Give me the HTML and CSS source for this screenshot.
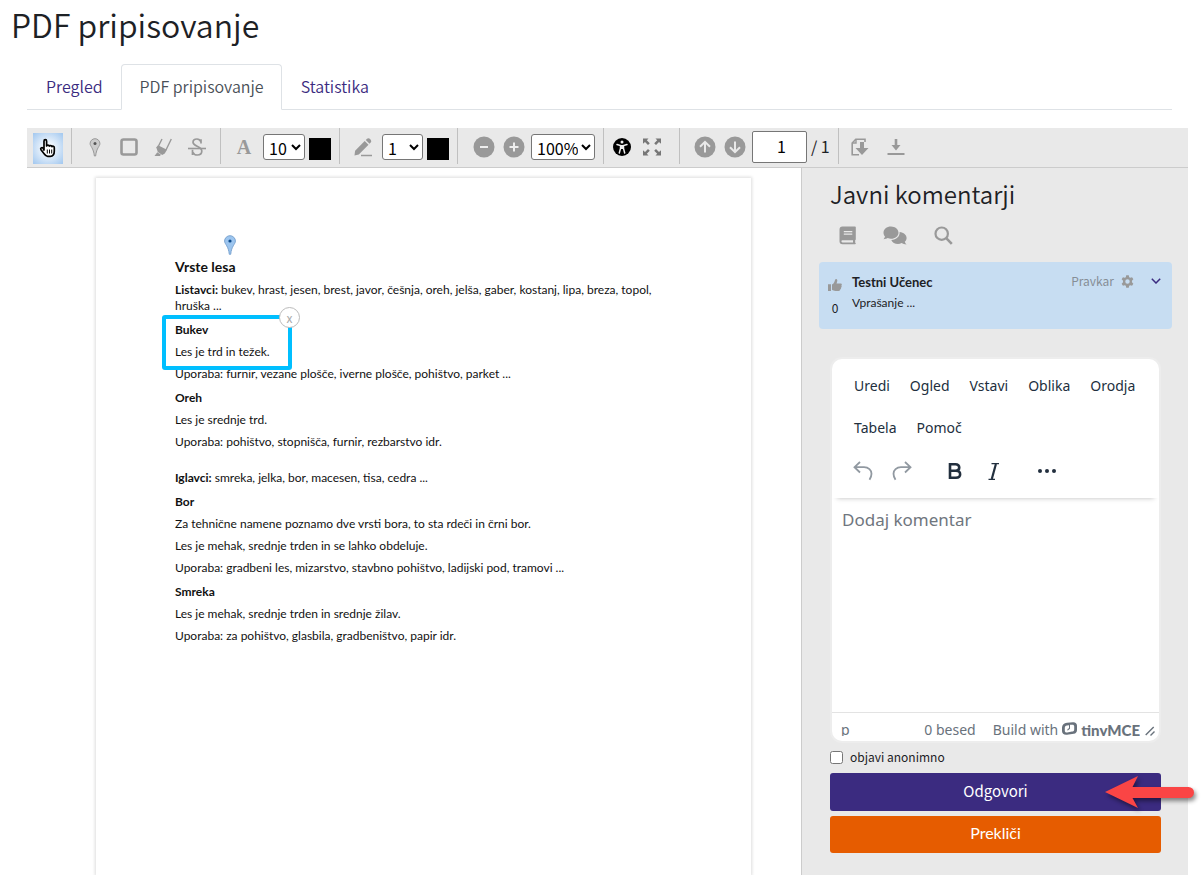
FILE: index.html
```html
<!DOCTYPE html>
<html lang="sl">
<head>
<meta charset="utf-8">
<title>PDF pripisovanje</title>
<link rel="stylesheet" href="styles.css">
</head>
<body>
<h1 class="page-title">PDF pripisovanje</h1>
<nav class="tabs">
  <a class="tab" href="#pregled">Pregled</a>
  <a class="tab tab-active" href="#pdf">PDF pripisovanje</a>
  <a class="tab" href="#statistika">Statistika</a>
</nav>

<div class="annotator">
  <div class="toolbar">
    <div class="group group-cursor">
      <button class="tool tool-active" aria-label="Kazalec"><svg width="18" height="20" viewBox="0 0 18 20"><path d="M5 12V3.2c0-2 2.6-2 2.6 0V8c.3-1.200 2.500-1.200 2.700.2.500-1 2.400-.8 2.600.5.700-.9 2.400-.5 2.400 1V13c0 3-1.200 5.300-4 5.300H8.600c-1.600 0-2.500-1-3.500-2.500L2 11.700c-1-1.600.9-2.800 2-1.700z" fill="#fff" stroke="#000" stroke-width="1.700" stroke-linejoin="round"/><path d="M8.300 11.500v4M10.500 11.500v4M12.700 11.500v4" stroke="#000" stroke-width="1"/></svg></button>
    </div>
    <div class="group">
      <button class="tool" aria-label="Zaznamek"><svg width="12" height="19" viewBox="0 0 12 19"><path d="M6 .7a4.900 4.900 0 0 0-4.900 5c0 2.500 3.300 4 4.300 12.300h1.200C7.600 9.700 10.900 8.200 10.900 5.700A4.900 4.900 0 0 0 6 .7z" fill="#ccc" stroke="#999"/><circle cx="6" cy="5.500" r="1.500" fill="#555"/></svg></button>
      <button class="tool" aria-label="Pravokotnik"><svg width="18" height="18" viewBox="0 0 18 18"><rect x="1.500" y="1.500" width="15" height="15" rx="2" fill="#e9e9e9" stroke="#999" stroke-width="2.600"/></svg></button>
      <button class="tool" aria-label="Označevalnik"><svg width="18" height="19" viewBox="0 0 18 19"><path d="M.500 18 3.300 14.300l3.700 2.500-1.200 1.200zM2.300 9.500l8.500 5.900-2.600 1.600-4.400-3.100zM2 9.700 4 7.300l9 4.500-2.400 4z" fill="#999"/><path d="M4.500 8 8 1M12 12 17.300 1" fill="none" stroke="#999" stroke-width="1.400"/></svg></button>
      <button class="tool" aria-label="Prečrtaj"><svg width="18" height="20" viewBox="0 0 18 20"><path d="M13 6.500V2.200M13 5C12 2.800 10.700 2 9 2 6.500 2 5 3.200 5 5.200c0 4.400 8.800 3.600 8.800 8.800 0 2.400-1.800 4-4.500 4-2.300 0-3.800-1-4.800-3.200M4.500 12.800V18" fill="none" stroke="#999" stroke-width="1.700"/><path d="M0 11.500h18" stroke="#999" stroke-width="1.600"/></svg></button>
    </div>
    <div class="group">
      <button class="tool tool-letter" aria-label="Besedilo">A</button>
      <select class="pick pick-size" aria-label="Velikost besedila"><option>10</option></select>
      <button class="swatch" aria-label="Barva besedila"></button>
    </div>
    <div class="group">
      <button class="tool" aria-label="Svinčnik"><svg width="19" height="20" viewBox="0 0 19 20"><path d="M.500 18.500l.6-4.800L10.700 4l3.800 3.800-9.700 9.800zM11.800 3l1.200-1.200c2-2 5.600 1.700 3.700 3.700l-1.200 1.200z" fill="#999"/><path d="M7 18.500h11" stroke="#999" stroke-width="1.500"/></svg></button>
      <select class="pick pick-line" aria-label="Debelina črte"><option>1</option></select>
      <button class="swatch" aria-label="Barva črte"></button>
    </div>
    <div class="group group-zoom">
      <button class="tool tool-narrow" aria-label="Pomanjšaj"><svg width="22" height="22" viewBox="0 0 22 22"><circle cx="11" cy="11" r="10.500" fill="#999"/><path d="M7 11h8" stroke="#eee" stroke-width="2"/></svg></button>
      <button class="tool tool-narrow" aria-label="Povečaj"><svg width="22" height="22" viewBox="0 0 22 22"><circle cx="11" cy="11" r="10.500" fill="#999"/><path d="M6.500 11h9M11 6.500v9" stroke="#eee" stroke-width="2"/></svg></button>
      <select class="pick pick-zoom" aria-label="Povečava"><option>100%</option></select>
    </div>
    <div class="group group-view">
      <button class="tool tool-narrow" aria-label="Dostopnost"><svg width="18" height="18" viewBox="0 0 18 18"><circle cx="9" cy="9" r="9" fill="#000"/><circle cx="9" cy="4" r="1.500" fill="#eee"/><path d="M4 6.600l3.500.9v3L6.300 15M14 6.600l-3.500.9v3l1.200 4.500" fill="none" stroke="#eee" stroke-width="1.500" stroke-linecap="round"/><path d="M7 7h4v4H7z" fill="#eee"/></svg></button>
      <button class="tool tool-narrow" aria-label="Celozaslonski način"><svg width="20" height="18" viewBox="0 0 20 18"><path d="M1 .5h5.500L4.800 2.200l3 3L6 7 3 4 1 5.800zM19 .5h-5.500l1.700 1.700-3 3L14 7l3-3 2 1.800zM1 17.500h5.500l-1.700-1.700 3-3L6 11l-3 3-2-1.800zM19 17.500h-5.500l1.700-1.700-3-3L14 11l3 3 2-1.800z" fill="#777"/></svg></button>
    </div>
    <div class="group group-pages">
      <button class="tool tool-narrow" aria-label="Prejšnja stran"><svg width="22" height="22" viewBox="0 0 22 22"><circle cx="11" cy="11" r="10.500" fill="#999"/><path d="M11 16.500V6M6 10.800l5-5 5 5" fill="none" stroke="#e9e9e9" stroke-width="2"/></svg></button>
      <button class="tool tool-narrow" aria-label="Naslednja stran"><svg width="22" height="22" viewBox="0 0 22 22"><circle cx="11" cy="11" r="10.500" fill="#999"/><path d="M11 5.500V16M6 11.200l5 5 5-5" fill="none" stroke="#e9e9e9" stroke-width="2"/></svg></button>
      <input class="page-number" type="text" value="1" aria-label="Stran">
      <span class="page-total">/ 1</span>
    </div>
    <div class="group group-export">
      <button class="tool tool-narrow" aria-label="Izvozi dokument"><svg width="18" height="18" viewBox="0 0 18 18"><path d="M14 4V1.200H4.800L1.200 5v11.800H8" fill="none" stroke="#999" stroke-width="1.600"/><path d="M5 1v4H1" fill="none" stroke="#999" stroke-width="1.400"/><path d="M9 4h4v6h4.500L11 17 4.500 10H9z" fill="#999"/></svg></button>
      <button class="tool tool-narrow" aria-label="Prenesi"><svg width="18" height="18" viewBox="0 0 18 18"><path d="M7.700 1h2.600v6h3.200L9 12.500 4.500 7h3.200zM.5 15h17v2H.5z" fill="#999"/></svg></button>
    </div>
  </div>

  <div class="workspace">
    <main class="viewer">
      <article class="sheet">
        <svg class="pin" width="14" height="20" viewBox="0 0 14 20"><path d="M7 .700a5.400 5.400 0 0 0-5.400 5.400c0 3 4 5 4.700 13.200h1.400C8.400 11.100 12.400 9.100 12.400 6.100A5.400 5.400 0 0 0 7 .7z" fill="#9cc5ef" stroke="#7ba4d0"/><circle cx="7" cy="6" r="1.600" fill="#0e4c8c"/></svg>
        <div class="mark"><button class="mark-close" aria-label="Odstrani">x</button></div>
        <h2>Vrste lesa</h2>
        <p><b>Listavci:</b> bukev, hrast, jesen, brest, javor, češnja, oreh, jelša, gaber, kostanj, lipa, breza, topol, hruška ...</p>
        <h3>Bukev</h3>
        <p>Les je trd in težek.</p>
        <p>Uporaba: furnir, vezane plošče, iverne plošče, pohištvo, parket ...</p>
        <h3>Oreh</h3>
        <p>Les je srednje trd.</p>
        <p>Uporaba: pohištvo, stopnišča, furnir, rezbarstvo idr.</p>
        <p class="part"><b>Iglavci:</b> smreka, jelka, bor, macesen, tisa, cedra ...</p>
        <h3>Bor</h3>
        <p>Za tehnične namene poznamo dve vrsti bora, to sta rdeči in črni bor.</p>
        <p>Les je mehak, srednje trden in se lahko obdeluje.</p>
        <p>Uporaba: gradbeni les, mizarstvo, stavbno pohištvo, ladijski pod, tramovi ...</p>
        <h3>Smreka</h3>
        <p>Les je mehak, srednje trden in srednje žilav.</p>
        <p>Uporaba: za pohištvo, glasbila, gradbeništvo, papir idr.</p>
      </article>
    </main>

    <aside class="comments">
      <h2 class="comments-title">Javni komentarji</h2>
      <div class="comments-tools">
        <button class="plain" aria-label="Dokument"><svg width="17" height="19" viewBox="0 0 17 19"><path fill-rule="evenodd" d="M3.500.500H16c.5 0 .8.300.8.800v12c0 .4-.2.700-.6.900v2.500c.4.100.6.400.6.800s-.4.800-.8.800H3.500A3 3 0 0 1 .5 15.300V3.500a3 3 0 0 1 3-3zM4.800 5v1.200h8.500V5zm0 2.600v1.200h8.500V7.600zM3.500 14.200c-1.500 0-1.500 2.200 0 2.200H14v-2.200z" fill="#999"/></svg></button>
        <button class="plain" aria-label="Pogovori"><svg width="24" height="19" viewBox="0 0 24 19"><path d="M8 .5C3.700.5.500 3.200.500 6.800c0 1.500.5 2.800 1.500 3.800-.3 1-.8 1.900-1.500 2.700 1.700 0 3-.5 4.200-1.200 1 .4 2.200.6 3.300.6 4.200 0 7.500-2.600 7.500-6S12.200.5 8 .5z" fill="#999"/><path d="M16.600 6c.5 4.200-3.400 8-8.300 8 1 2.400 3.600 4 6.600 4 1.400 0 2.600-.3 3.700-.9 1.200.8 3 1.300 4.900 1.300-.8-.8-1.500-1.700-1.700-2.700 1.200-1 1.800-2.300 1.800-3.700 0-3-2.900-5.500-7-6z" fill="#999"/></svg></button>
        <button class="plain" aria-label="Išči"><svg width="19" height="19" viewBox="0 0 19 19"><circle cx="7.700" cy="7.700" r="6.200" fill="none" stroke="#999" stroke-width="2.200"/><path d="M12.200 12.200l5.600 5.600" stroke="#999" stroke-width="2.600"/></svg></button>
      </div>

      <section class="comment">
        <div class="votes">
          <button class="plain" aria-label="Všeč mi je"><svg width="14" height="12" viewBox="0 0 14 12"><path d="M0 5.200h3V12H0zM4 5.500C6 4.500 6.500 2.800 7 1c.5-1.700 2.500-1 2.300.8C9.200 2.900 8.800 3.800 8.500 4.500h4c1.500 0 1.700 1.500.8 2.200.7.700.4 1.700-.4 2 .4.800 0 1.500-.7 1.700.1 1-.5 1.600-1.500 1.600H7.500C6 12 5 11.500 4 10.800z" fill="#999"/></svg></button>
          <span>0</span>
        </div>
        <div class="comment-body">
          <strong>Testni Učenec</strong>
          <p>Vprašanje ...</p>
        </div>
        <div class="comment-meta">
          <span>Pravkar</span>
          <button class="plain" aria-label="Nastavitve"><svg width="13" height="13" viewBox="0 0 14 14"><path fill-rule="evenodd" d="M5.600.300h2.800l.4 2 1.200.7 1.900-.7 1.400 2.400-1.500 1.400v1.800l1.500 1.400-1.400 2.400-1.900-.7-1.200.7-.4 2H5.600l-.4-2-1.200-.7-1.900.7L.700 9.300l1.500-1.400V6.100L.7 4.700l1.400-2.400L4 3l1.200-.7zM7 4.600a2.400 2.400 0 1 0 0 4.800 2.400 2.400 0 0 0 0-4.800z" fill="#999"/></svg></button>
          <button class="plain expand" aria-label="Razširi"><svg width="10" height="6" viewBox="0 0 10 6"><path d="M.8.800 5 5 9.200.8" fill="none" stroke="#3b2b80" stroke-width="1.500"/></svg></button>
        </div>
      </section>

      <form class="reply">
        <div class="editor">
          <div class="editor-head">
            <div class="menubar">
              <button type="button">Uredi</button><button type="button">Ogled</button><button type="button">Vstavi</button><button type="button">Oblika</button><button type="button">Orodja</button><button type="button">Tabela</button><button type="button">Pomoč</button>
            </div>
            <div class="editor-tools">
              <button type="button" class="edit-tool" aria-label="Razveljavi"><svg width="20" height="20" viewBox="0 0 20 20"><path d="M7 1 1.500 6.200 7 11.500M2 6.200h9c4.500 0 7.500 3 7.500 6.500 0 2-.7 4-2 6" fill="none" stroke="#9199a1" stroke-width="1.800"/></svg></button>
              <button type="button" class="edit-tool" aria-label="Uveljavi"><svg width="20" height="20" viewBox="0 0 20 20"><path d="M13 1l5.500 5.200L13 11.500M18 6.200H9c-4.500 0-7.500 3-7.500 6.500 0 2 .7 4 2 6" fill="none" stroke="#9199a1" stroke-width="1.800"/></svg></button>
              <button type="button" class="edit-tool edit-next" aria-label="Krepko"><svg width="14" height="16" viewBox="0 0 14 16"><path d="M2 1.300h5.500c5 0 5 6.400 0 6.400H2zM2 7.700h6c5.500 0 5.500 7 0 7H2z" fill="none" stroke="#222f3e" stroke-width="2.600"/></svg></button>
              <button type="button" class="edit-tool" aria-label="Ležeče"><svg width="12" height="17" viewBox="0 0 12 17"><path d="M3.500.600H11M.5 16.400H7" fill="none" stroke="#222f3e" stroke-width="1.200"/><path d="M7.900 1 3.800 16" fill="none" stroke="#222f3e" stroke-width="2.200"/></svg></button>
              <button type="button" class="edit-tool edit-next" aria-label="Več"><svg width="18" height="4" viewBox="0 0 18 4"><circle cx="2" cy="2" r="2" fill="#222f3e"/><circle cx="9" cy="2" r="2" fill="#222f3e"/><circle cx="16" cy="2" r="2" fill="#222f3e"/></svg></button>
            </div>
          </div>
          <textarea class="editor-text" placeholder="Dodaj komentar" aria-label="Dodaj komentar"></textarea>
          <div class="statusbar">
            <div class="status-text">
              <span class="status-path">p</span>
              <span>0 besed</span>
              <a class="brand" href="#tiny">Build with <svg width="15" height="13" viewBox="0 0 15 13"><path fill-rule="evenodd" d="M5 .700 11 .200c2.300-.2 4 1.300 4 3.500V8c0 2.200-1.300 3.500-3.200 3.800L5 12.800C2 13.200 0 11.700 0 9V5.500C0 3 2 1 5 .7zM5 3.500C3.500 3.700 2.800 4.500 2.800 5.800v2.900c0 1.300.9 2 2.400 1.800l4.800-.9c1.500-.2 2.200-1 2.200-2.200V4.300c0-1.200-.9-1.800-2.200-1.600H8v4L5.500 8.700V7l1.500-.7V3.200z" fill="#69727c"/></svg> <b>tinyMCE</b></a>
            </div>
            <svg class="grip" width="10" height="10" viewBox="0 0 10 10"><path d="M.7 9 8.700 1M5.500 9.500 9.500 5.500" stroke="#69727c" stroke-width="1.400"/></svg>
          </div>
        </div>
        <label class="anonymous"><input type="checkbox"> objavi anonimno</label>
        <button type="button" class="btn btn-primary">Odgovori
          <svg class="pointer" width="96" height="42" viewBox="0 0 96 42"><path d="M2 20 35 4l-5.500 11H85.500a5.500 5.500 0 0 1 0 11H29.500L35 36z" fill="#fa4545"/></svg>
        </button>
        <button type="button" class="btn btn-cancel">Prekliči</button>
      </form>
    </aside>
  </div>
</div>
</body>
</html>
```
FILE: styles.css
```css
* { box-sizing: border-box; }

body {
  margin: 0;
  min-height: 100vh;
  display: flex;
  flex-direction: column;
  overflow-x: hidden;
  background: #fff;
  color: #1d2125;
  font: 13px/20px "Noto Sans CJK SC", "Noto Sans", sans-serif;
}

h1, h2, h3, p { margin: 0; }
button, input, select, textarea { font: inherit; color: inherit; margin: 0; }
button { cursor: pointer; padding: 0; border: 0; background: none; }
svg { display: block; }

.page-title {
  padding: 2px 11px 0;
  font-size: 32px;
  line-height: 44px;
  font-weight: 350;
}

/* Tabs */
.tabs {
  display: flex;
  margin: 18px 32px 0 27px;
  border-bottom: 1px solid #dee2e6;
}
.tab {
  padding: 7px 17px 9px 18px;
  margin-bottom: -1px;
  border: 1px solid transparent;
  border-radius: 4px 4px 0 0;
  font-size: 16px;
  font-weight: 350;
  line-height: 28px;
  color: #3b2b80;
  text-decoration: none;
}
.tab-active { background: #fff; border-color: #dee2e6 #dee2e6 #fff; color: #495057; }

.annotator {
  flex: 1;
  display: flex;
  flex-direction: column;
  margin: 18px 16px 0 27px;
}

/* Toolbar */
.toolbar {
  display: flex;
  height: 40px;
  padding-bottom: 3px;
  background: #e9e9e9;
  border-bottom: 1px solid #ccc;
}
.group {
  display: flex;
  align-items: center;
  gap: 4px;
  padding: 2px 8px 0;
  border-right: 1px solid #c0c0c0;
}
.group-cursor { padding: 4px 8px 0 6px; }
.group-zoom { padding-left: 13px; }
.group-view { padding: 2px 14px 0 5px; }
.group-pages { padding-left: 12px; }
.group-export { gap: 10px; border-right: 0; }
.tool {
  display: flex;
  align-items: center;
  justify-content: center;
  width: 30px;
  height: 30px;
}
.tool-narrow { width: 26px; }
.tool-active { height: 31px; background: radial-gradient(circle, #fff 10%, #a6caf0 95%); }
.tool-letter { color: #999; font: bold 20px/30px "Liberation Serif", serif; }
.pick {
  height: 26px;
  padding: 0 0 2px 1px;
  border: 1px solid #767676;
  border-radius: 3px;
  background: #fff;
  color: #000;
  font-size: 16px;
  line-height: 22px;
}
.pick-size { width: 42px; }
.pick-line { width: 41px; }
.pick-zoom { width: 64px; }
.swatch { width: 22px; height: 22px; margin-top: 4px; background: #000; }
.page-number {
  width: 55px;
  height: 32px;
  border: 1px solid #767676;
  border-radius: 2px;
  padding: 0 2px 2px 6px;
  background: #fff;
  color: #000;
  font-size: 16px;
  text-align: center;
}
.page-total { padding-bottom: 2px; font-size: 16px; white-space: nowrap; }

/* Document */
.workspace { flex: 1; display: grid; grid-template-columns: 1fr 387px; }
.viewer { display: flex; padding: 10px 50px 0 69px; }
.sheet {
  position: relative;
  flex: 1;
  padding: 80px 70px 0 79px;
  background: #fff;
  box-shadow: 0 0 3px 1px #ddd;
  color: #111;
  font: 12px/16px Lato, sans-serif;
}
.sheet h2 { font-size: 14px; line-height: 18px; }
.sheet h3 { margin-top: 8px; font-size: 12px; line-height: 16px; }
.sheet p { margin-top: 6px; }
.sheet .part { margin-top: 20px; }
.pin { position: absolute; left: 127px; top: 57px; }
.mark {
  position: absolute;
  left: 66px;
  top: 137px;
  width: 130px;
  height: 55px;
  border: 4px solid #00bfff;
  border-radius: 3px;
}
.mark-close {
  position: absolute;
  right: -12px;
  top: -12px;
  width: 21px;
  height: 21px;
  border: 1px solid #bbb;
  border-radius: 50%;
  background: #fff;
  color: #aaa;
  font: 12px/16px "Noto Sans CJK SC", sans-serif;
}

/* Comments */
.comments {
  border-left: 1px solid #ccc;
  background: #e9e9e9;
  padding: 8px 16px 22px 17px;
}
.comments-title { padding-left: 11px; font-size: 24px; line-height: 36px; font-weight: 350; }
.comments-tools {
  display: flex;
  align-items: center;
  gap: 27px;
  padding: 14px 20px 17px;
  line-height: 0;
}
.comment {
  display: flex;
  height: 67px;
  padding: 10px 11px 0 10px;
  border-radius: 4px;
  background: #c7ddf2;
  font-size: 12px;
}
.votes { width: 12px; display: flex; flex-direction: column; align-items: center; gap: 7px; padding-top: 7px; }
.comment-body { flex: 1; padding-left: 11px; font-family: Lato, sans-serif; }
.comment-body strong { font-size: 13px; }
.comment-meta { display: flex; align-items: center; gap: 7px; height: 18px; color: #868e96; }
.expand { margin-left: 10px; }
.reply { padding: 30px 11px 0; }

.editor {
  margin: 0 2px;
  border-radius: 10px;
  background: #fff;
  box-shadow: 0 0 0 2px #ededed;
  color: #222f3e;
  font-family: "Noto Sans", sans-serif;
  font-size: 14px;
}
.editor-head { position: relative; padding: 6px 12px 5px; box-shadow: 0 5px 5px -5px #bbb; }
.menubar { display: flex; flex-wrap: wrap; }
.menubar button { height: 42px; padding: 0 10px; }
.editor-tools { display: flex; align-items: center; height: 44px; padding-left: 1px; }
.edit-tool { display: flex; align-items: center; justify-content: center; width: 36px; height: 34px; margin-right: 3px; }
.edit-next { margin-left: 14px; }
.editor-text {
  display: block;
  width: 100%;
  height: 214px;
  padding: 10px;
  border: 0;
  background: none;
  resize: none;
  font-size: 17px;
  line-height: 24px;
}
.editor-text::placeholder { color: #6f767e; }
.statusbar {
  display: flex;
  align-items: flex-start;
  height: 29px;
  padding: 7px 4px 0 9px;
  border-top: 1px solid #e3e3e3;
  color: #69727c;
}
.status-text { flex: 1; display: flex; gap: 17px; height: 16px; overflow: hidden; line-height: 20px; }
.status-path { flex: 1; }
.brand { display: flex; align-items: center; gap: 4px; height: 20px; color: inherit; text-decoration: none; }
.brand b { font: 900 15px/20px Lato, sans-serif; }
.brand svg { margin-bottom: 3px; }
.grip { margin: 6px 0 0 5px; }

.anonymous { display: flex; align-items: center; gap: 7px; height: 32px; font-size: 12px; }
.anonymous input { width: 13px; height: 13px; }
.btn {
  position: relative;
  display: block;
  width: 100%;
  height: 38px;
  padding-bottom: 3px;
  border-radius: 3px;
  color: #fff;
  font-size: 15px;
  line-height: 24px;
}
.btn-primary { background: #3b2b80; }
.btn-cancel { height: 37px; margin-top: 5px; background: #e65c00; font-family: Lato, sans-serif; font-size: 16px; }
.pointer { position: absolute; right: -38px; top: -1px; filter: drop-shadow(2px 3px 2px rgba(0, 0, 0, .45)); }
```
